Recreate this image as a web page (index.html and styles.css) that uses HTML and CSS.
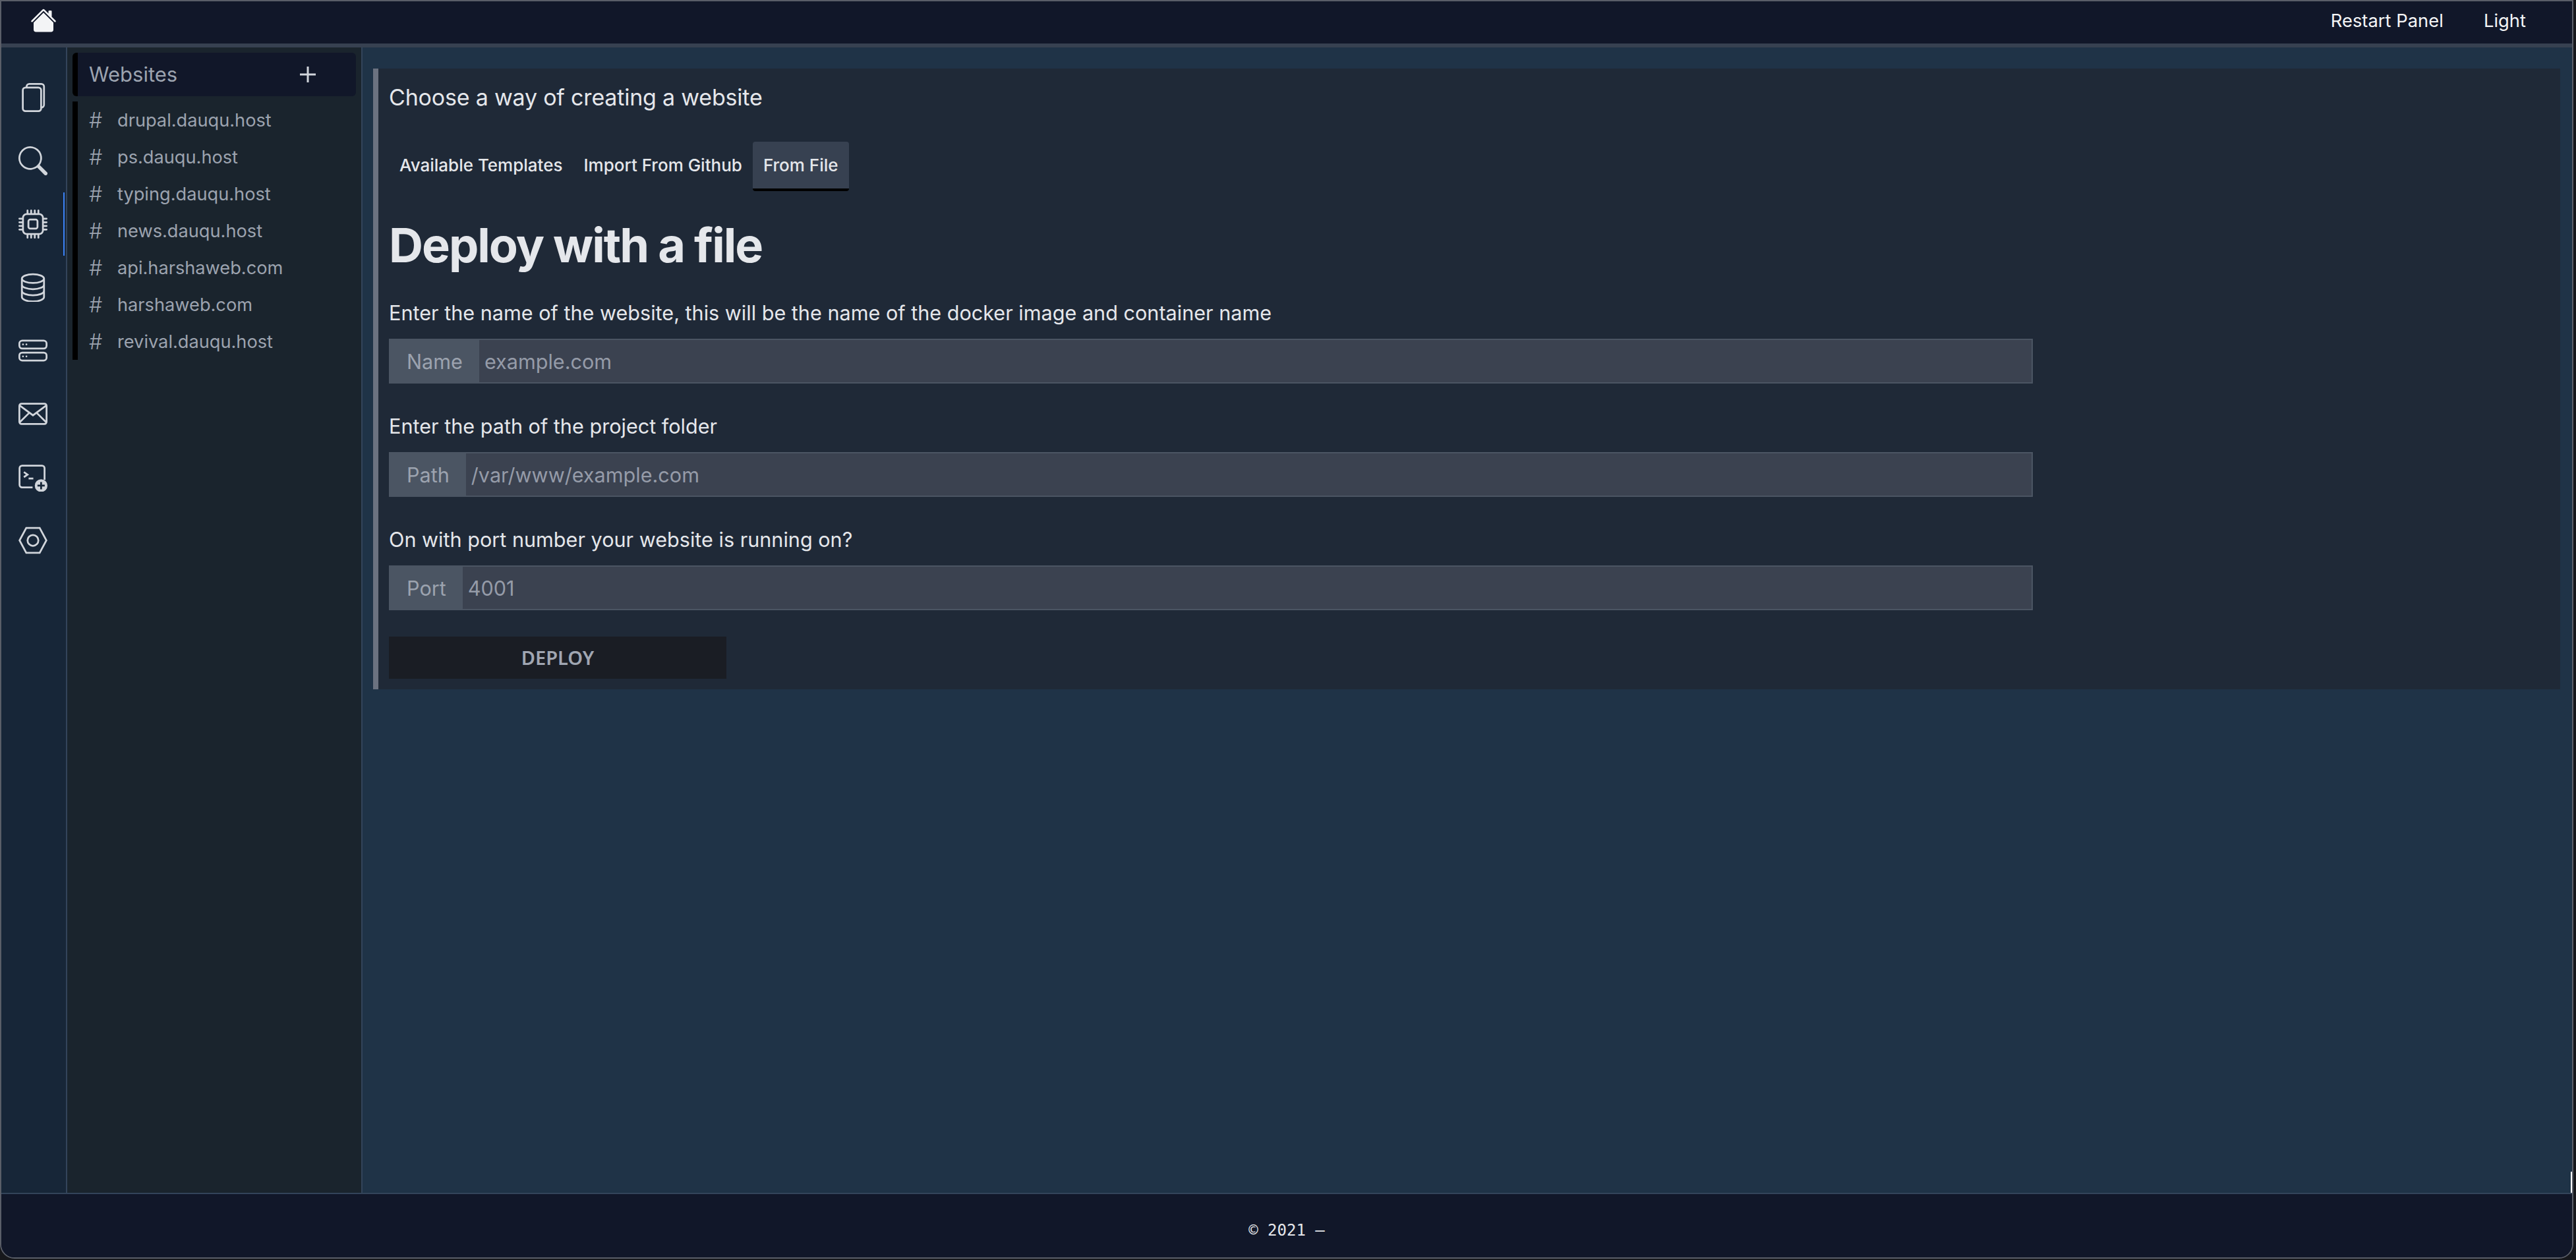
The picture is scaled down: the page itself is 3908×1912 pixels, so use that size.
FILE: index.html
```html
<!DOCTYPE html>
<html>
<head>
  <meta charset="utf-8">
  <title>Websites</title>
  <link rel="stylesheet" href="styles.css">
</head>
<body>
  <div class="window">
    <header class="topbar">
      <a class="home" href="#">
        <svg viewBox="0 0 16 16" width="40" height="40" fill="currentColor">
          <path d="m8 3.293 6 6V13.5a1.5 1.5 0 0 1-1.5 1.5h-9A1.5 1.5 0 0 1 2 13.5V9.293l6-6Z"/>
          <path d="M7.293 1.5a1 1 0 0 1 1.414 0L11 3.793V2.5a.5.5 0 0 1 .5-.5h1a.5.5 0 0 1 .5.5v3.293l2.354 2.353a.5.5 0 0 1-.708.708L8 2.207l-6.646 6.647a.5.5 0 1 1-.708-.708L7.293 1.5Z"/>
        </svg>
      </a>
      <nav class="top-links">
        <a href="#">Restart Panel</a>
        <a href="#">Light</a>
      </nav>
    </header>

    <div class="content">
      <aside class="rail">
        <a class="rail-item" href="#">
          <svg class="line" viewBox="0 0 16 16" width="44" height="44">
            <rect x="2.4" y="2.5" width="10.1" height="13" rx="1.5"/>
            <path d="M4.5 2.4V2A1.5 1.5 0 0 1 6 .5h6.6A1.5 1.5 0 0 1 14.1 2v10a1.5 1.5 0 0 1-1.5 1.5"/>
          </svg>
        </a>
        <a class="rail-item" href="#">
          <svg viewBox="0 0 16 16" width="44" height="44" fill="currentColor">
            <path d="M11.742 10.344a6.5 6.5 0 1 0-1.397 1.398h-.001c.03.04.062.078.098.115l3.85 3.85a1 1 0 0 0 1.415-1.414l-3.85-3.85a1.007 1.007 0 0 0-.115-.1zM12 6.5a5.5 5.5 0 1 1-11 0 5.5 5.5 0 0 1 11 0z"/>
          </svg>
        </a>
        <a class="rail-item active" href="#">
          <svg viewBox="0 0 16 16" width="44" height="44" fill="currentColor">
            <path d="M5 0a.5.5 0 0 1 .5.5V2h1V.5a.5.5 0 0 1 1 0V2h1V.5a.5.5 0 0 1 1 0V2h1V.5a.5.5 0 0 1 1 0V2A2.5 2.5 0 0 1 14 4.5h1.5a.5.5 0 0 1 0 1H14v1h1.5a.5.5 0 0 1 0 1H14v1h1.5a.5.5 0 0 1 0 1H14v1h1.5a.5.5 0 0 1 0 1H14a2.5 2.5 0 0 1-2.5 2.5v1.5a.5.5 0 0 1-1 0V14h-1v1.5a.5.5 0 0 1-1 0V14h-1v1.5a.5.5 0 0 1-1 0V14h-1v1.5a.5.5 0 0 1-1 0V14A2.5 2.5 0 0 1 2 11.5H.5a.5.5 0 0 1 0-1H2v-1H.5a.5.5 0 0 1 0-1H2v-1H.5a.5.5 0 0 1 0-1H2v-1H.5a.5.5 0 0 1 0-1H2A2.5 2.5 0 0 1 4.5 2V.5A.5.5 0 0 1 5 0zm-.5 3A1.5 1.5 0 0 0 3 4.5v7A1.5 1.5 0 0 0 4.5 13h7a1.5 1.5 0 0 0 1.5-1.5v-7A1.5 1.5 0 0 0 11.5 3h-7zM5 6.5A1.5 1.5 0 0 1 6.5 5h3A1.5 1.5 0 0 1 11 6.5v3A1.5 1.5 0 0 1 9.5 11h-3A1.5 1.5 0 0 1 5 9.5v-3zM6.5 6a.5.5 0 0 0-.5.5v3a.5.5 0 0 0 .5.5h3a.5.5 0 0 0 .5-.5v-3a.5.5 0 0 0-.5-.5h-3z"/>
          </svg>
        </a>
        <a class="rail-item" href="#">
          <svg class="line" viewBox="0 0 16 16" width="44" height="44">
            <g transform="translate(0 .3)">
              <ellipse cx="8" cy="2.9" rx="6.1" ry="2.4"/>
              <path d="M1.9 2.9v10.2c0 1.3 2.7 2.4 6.1 2.4s6.1-1.1 6.1-2.4V2.9"/>
              <path d="M1.9 6.3c0 1.3 2.7 2.4 6.1 2.4s6.1-1.1 6.1-2.4"/>
              <path d="M1.9 9.7c0 1.3 2.7 2.4 6.1 2.4s6.1-1.1 6.1-2.4"/>
            </g>
          </svg>
        </a>
        <a class="rail-item" href="#">
          <svg class="line" viewBox="0 0 16 16" width="44" height="44">
            <rect x=".5" y="2.5" width="15" height="4.4" rx="1.6"/>
            <rect x=".5" y="9.1" width="15" height="4.4" rx="1.6"/>
            <circle class="dot" cx="2.5" cy="4.6" r=".5"/>
            <circle class="dot" cx="4.4" cy="4.6" r=".5"/>
            <circle class="dot" cx="2.5" cy="11.2" r=".5"/>
            <circle class="dot" cx="4.4" cy="11.2" r=".5"/>
          </svg>
        </a>
        <a class="rail-item" href="#">
          <svg class="line" viewBox="0 0 16 16" width="44" height="44">
            <rect x=".5" y="2.4" width="15" height="11.2" rx="1.2"/>
            <path d="M.7 3.4 8 8.8l7.3-5.4M.7 12.6l5.2-5.1M15.3 12.6l-5.2-5.1"/>
          </svg>
        </a>
        <a class="rail-item" href="#">
          <svg class="line" viewBox="0 0 16 16" width="44" height="44">
            <g transform="translate(0 .7)">
              <path d="M7.8 13H2A1.4 1.4 0 0 1 .6 11.6V2.4A1.4 1.4 0 0 1 2 1h11a1.4 1.4 0 0 1 1.4 1.4v6.4"/>
              <path d="m3 4.5 2 1.4-2 1.4M5.6 8.1h2.6"/>
              <circle class="fill" cx="12.5" cy="12" r="3.5"/>
              <path class="cut" d="M12.5 10v4M10.5 12h4"/>
            </g>
          </svg>
        </a>
        <a class="rail-item" href="#">
          <svg class="line" viewBox="0 0 16 16" width="44" height="44">
            <path d="M4.3 1.1h7.4L15.4 8l-3.7 6.9H4.3L.6 8z"/>
            <circle cx="8" cy="8" r="3"/>
          </svg>
        </a>
      </aside>

      <aside class="panel">
        <div class="panel-head">
          <span>Websites</span>
          <svg class="line" viewBox="0 0 26 26" width="26" height="26">
            <path d="M13 1v24M1 13h24"/>
          </svg>
        </div>
        <ul class="site-list">
          <li><span class="hash">#</span>drupal.dauqu.host</li>
          <li><span class="hash">#</span>ps.dauqu.host</li>
          <li><span class="hash">#</span>typing.dauqu.host</li>
          <li><span class="hash">#</span>news.dauqu.host</li>
          <li><span class="hash">#</span>api.harshaweb.com</li>
          <li><span class="hash">#</span>harshaweb.com</li>
          <li><span class="hash">#</span>revival.dauqu.host</li>
        </ul>
      </aside>

      <main class="main">
        <section class="card">
          <p class="card-title">Choose a way of creating a website</p>
          <div class="tabs">
            <a class="tab" href="#">Available Templates</a>
            <a class="tab" href="#">Import From Github</a>
            <a class="tab selected" href="#">From File</a>
          </div>
          <h1>Deploy with a file</h1>

          <label for="name">Enter the name of the website, this will be the name of the docker image and container name</label>
          <div class="field">
            <span class="addon">Name</span>
            <input type="text" id="name" placeholder="example.com" />
          </div>

          <label for="path">Enter the path of the project folder</label>
          <div class="field">
            <span class="addon">Path</span>
            <input type="text" id="path" placeholder="/var/www/example.com" />
          </div>

          <label for="port">On with port number your website is running on?</label>
          <div class="field">
            <span class="addon">Port</span>
            <input type="text" id="port" placeholder="4001" />
          </div>

          <button class="deploy">DEPLOY</button>
        </section>
      </main>
    </div>

    <footer class="footer">&copy; 2021 &ndash;</footer>
    <div class="scroll-thumb"></div>
  </div>
</body>
</html>
```

FILE: styles.css
```css
* {
  box-sizing: border-box;
}
body {
  margin: 0;
  background: #17181c;
  font-family: Inter, "Liberation Sans", sans-serif;
}
a {
  color: inherit;
  text-decoration: none;
}
.window {
  position: relative;
  width: 3904px;
  height: 1910px;
  display: flex;
  flex-direction: column;
  border: 2px solid #5a5e68;
  border-radius: 0 0 22px 22px;
  overflow: hidden;
  background: #111729;
}
.topbar {
  height: 70px;
  flex: none;
  display: flex;
  align-items: center;
  justify-content: space-between;
  padding: 0 70px 6px 44px;
  background: #111729;
  border-bottom: 6px solid #374151;
  color: #f3f4f6;
}
.home {
  display: flex;
}
.top-links {
  display: flex;
  gap: 61px;
  font-size: 27.4px;
}
.content {
  flex: 1;
  min-height: 0;
  display: flex;
}
.rail {
  width: 100px;
  flex: none;
  padding: 28px 2px 0 0;
  background: #172638;
  border-right: 2px solid #33445a;
  color: #d1d5db;
}
.rail-item {
  height: 96px;
  display: flex;
  align-items: center;
  justify-content: center;
}
.rail-item.active {
  border-right: 2px solid #3b82f6;
  padding-left: 2px;
}
.line {
  fill: none;
  stroke: currentColor;
  stroke-width: 1;
}
.line .dot {
  fill: currentColor;
  stroke: none;
}
.line .fill {
  fill: currentColor;
  stroke: none;
}
.line .cut {
  stroke: #172638;
}
.panel {
  width: 448px;
  flex: none;
  padding: 8px;
  background: #1a242d;
  border-right: 2px solid #33445a;
  color: #9ca3af;
}
.panel-head {
  height: 66px;
  display: flex;
  align-items: center;
  justify-content: space-between;
  padding: 0 60px 2px 17px;
  background: #111729;
  border-left: 8px solid #000;
  border-radius: 6px;
  font-size: 31px;
}
.panel-head svg {
  margin-top: 2px;
  color: #d1d5db;
  stroke-width: 3;
}
.site-list {
  list-style: none;
  margin: 8px 0 0;
  padding: 0 0 0 17px;
  border-left: 8px solid #000;
  font-size: 27.2px;
}
.site-list li {
  height: 56px;
  display: flex;
  align-items: center;
}
.hash {
  width: 43px;
  font-size: 32px;
  font-weight: 300;
}
.main {
  flex: 1;
  min-width: 0;
  padding: 32px 18px 0 16px;
  background: #1f3347;
}
.card {
  height: 942px;
  padding: 16px;
  background: #1f2937;
  border-left: 8px solid #6b7280;
  color: #e5e7eb;
}
.card-title {
  margin: 0;
  font-size: 34px;
  letter-spacing: -0.2px;
  line-height: 56px;
}
.tabs {
  display: flex;
  margin-top: 39px;
}
.tab {
  height: 75px;
  padding: 0 16px;
  font-size: 26px;
  font-weight: 500;
  line-height: 72px;
  border-radius: 4px;
}
.tab.selected {
  background: #374151;
  border-bottom: 4px solid #000;
}
h1 {
  margin: 42px 0 0;
  font-size: 72px;
  font-weight: 700;
  letter-spacing: -2px;
  line-height: 80px;
}
label {
  display: block;
  margin-top: 39px;
  font-size: 30.6px;
  line-height: 48px;
}
.field + label {
  margin-top: 41px;
}
.field {
  width: 2494px;
  height: 68px;
  margin-top: 15px;
  display: flex;
  border: 2px solid #4b5563;
  font-size: 30.6px;
}
.addon {
  padding: 0 25px;
  display: flex;
  align-items: center;
  background: #4b5563;
  color: #9ca3af;
}
input {
  flex: 1;
  min-width: 0;
  padding: 0 8px;
  border: none;
  outline: none;
  background: #3b4250;
  font: inherit;
  color: #e5e7eb;
}
input::placeholder {
  color: #959ba8;
  opacity: 1;
}
.deploy {
  width: 512px;
  height: 64px;
  margin-top: 40px;
  padding-bottom: 3px;
  display: block;
  border: none;
  background: #1a1d24;
  color: #a0a6b2;
  font-family: "Noto Sans", sans-serif;
  font-size: 29px;
  font-weight: 600;
  cursor: pointer;
}
.footer {
  flex: none;
  height: 98px;
  padding-top: 38px;
  background: #111729;
  border-top: 2px solid #33445a;
  text-align: center;
  font-family: "DejaVu Sans Mono", monospace;
  font-size: 24px;
  line-height: 34px;
  color: #e5e7eb;
}
.scroll-thumb {
  position: absolute;
  right: -2px;
  top: 1776px;
  width: 4px;
  height: 32px;
  background: #fff;
}
```
